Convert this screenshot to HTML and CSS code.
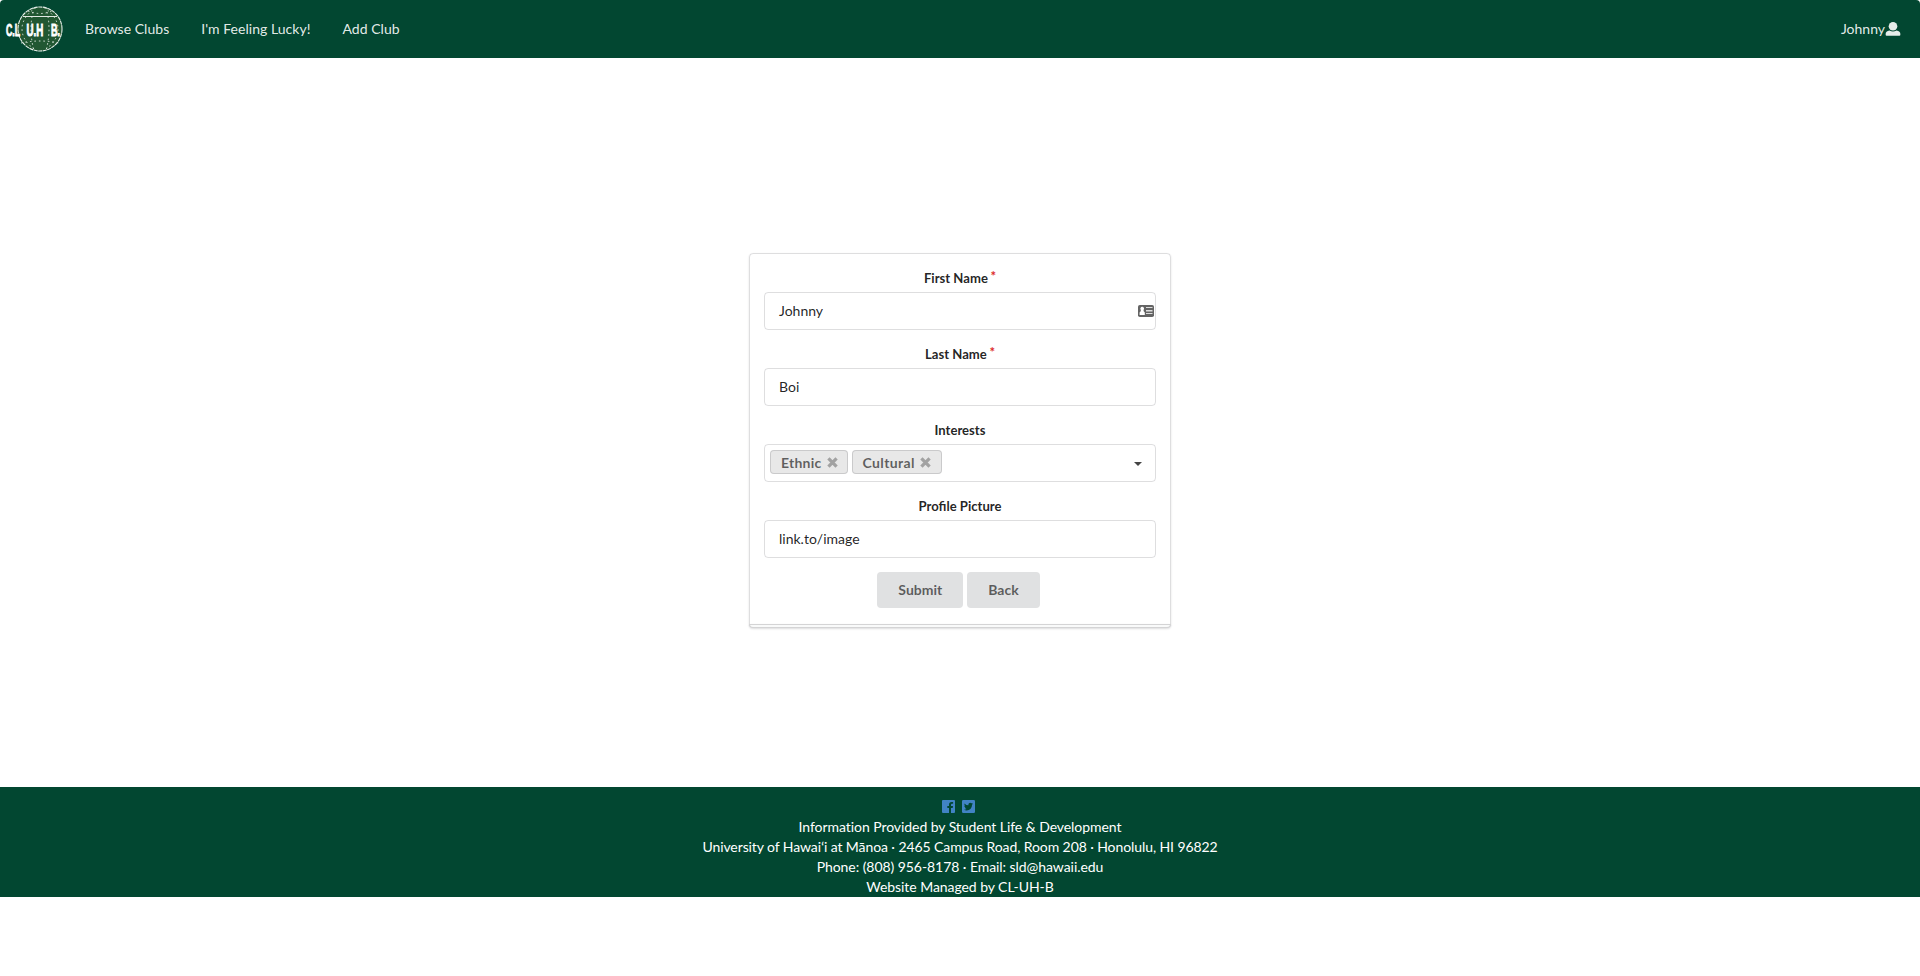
FILE: index.html
```html
<!DOCTYPE html>
<html lang="en">
<head>
<meta charset="utf-8">
<title>CL-UH-B</title>
<link rel="stylesheet" href="styles.css">
</head>
<body>
<nav class="menu">
  <a class="brand">
    <svg width="58" height="48" viewBox="0 0 58 48">
      <circle cx="35" cy="24" r="22" fill="#215732" stroke="#e8f0ea" stroke-width="1.1" stroke-dasharray="4 .6"/>
      <g fill="none" stroke="#dfe9e2" stroke-width="1">
        <path d="M18 11.500H52" stroke-width="1.2"/>
        <path d="M23 6Q35 11 47 6M16 38Q35 34 54 38M31 2.500Q17 12 17 24T31 45.500M39 2.500Q53 12 53 24T39 45.500M29 2.500Q23 24 29 45.500M41 2.500Q47 24 41 45.500" stroke-dasharray="1.500 3"/>
      </g>
      <g class="logo-text"><text transform="translate(1 30.500) scale(.53 1)">C.L</text><text transform="translate(21.500 30.500) scale(.59 1)">U.H</text><text transform="translate(46 30.500) scale(.55 1)">B.</text></g>
    </svg>
  </a>
  <a class="item">Browse Clubs</a>
  <a class="item">I'm Feeling Lucky!</a>
  <a class="item">Add Club</a>
  <a class="account">Johnny<svg width="16" height="16" viewBox="0 0 16 16"><circle cx="8" cy="5.200" r="4.300" fill="currentColor"/><path fill="currentColor" d="M4.500 9.600Q8 11.500 11.500 9.600 15.400 10 15.400 13.300q0 1.500-1 1.500H1.600q-1 0-1-1.500Q.6 10 4.500 9.600z"/></svg></a>
</nav>
<main class="content">
  <form class="segment">
    <div class="field"><label class="label required">First Name</label>
      <div class="input"><span>Johnny</span><svg class="card-icon" width="16" height="12" viewBox="0 0 16 12"><rect width="16" height="12" rx="1.800" fill="#646464"/><path fill="#fff" d="M4.200 1.800a1.800 1.800 0 0 1 1.300 3.100Q5.300 6 6.800 7.500V10H1.600V7.500Q3.100 6 2.900 4.900A1.800 1.800 0 0 1 4.200 1.800z"/><path fill="#ddd" d="M8 2h6.500v1H8zM8 5h6.500v1.500H8zM8 8h6.500v1H8z"/></svg></div></div>
    <div class="field"><label class="label required">Last Name</label><div class="input"><span>Boi</span></div></div>
    <div class="field"><label class="label">Interests</label>
      <div class="input dropdown">
        <a class="tag">Ethnic<svg width="11" height="11" viewBox="0 0 10 10"><path d="M1.300 1.300 8.700 8.700M8.700 1.300 1.300 8.700"/></svg></a>
        <a class="tag tag-wide">Cultural<svg width="11" height="11" viewBox="0 0 10 10"><path d="M1.300 1.300 8.700 8.700M8.700 1.300 1.300 8.700"/></svg></a>
        <svg class="caret" width="8" height="4" viewBox="0 0 8 4"><path fill="#444" d="M0 0h8L4 4z"/></svg>
      </div></div>
    <div class="field"><label class="label">Profile Picture</label><div class="input"><span>link.to/image</span></div></div>
    <div class="buttons"><button type="button" class="button">Submit</button><button type="button" class="button">Back</button></div>
  </form>
</main>
<footer class="footer">
  <div class="social">
    <svg width="13" height="13" viewBox="0 0 13 13"><path fill="#4183c4" fill-rule="evenodd" d="M1 0h11q1 0 1 1v11q0 1-1 1H9V8h1.700l.3-2H9V4.800q0-1 1-1h1.100V2H9.500Q7 2 7 4.500V6H5.300v2H7v5H1q-1 0-1-1V1q0-1 1-1z"/></svg>
    <svg width="13" height="13" viewBox="0 0 13 13"><rect width="13" height="13" rx="1.200" fill="#4183c4"/><path fill="#024731" d="M11 3.800l-1 1C10 8.300 7.600 10.500 4.700 10.500Q3.200 10.500 2 9.700q1.500 0 2.500-.8Q3.300 8.800 2.900 7.600h.8Q2.300 7.100 2.300 5.700l.8.2Q1.900 4.900 2.600 3.400 4.100 5.200 6.400 5.300 6.200 2.700 8.300 2.700q.7 0 1.300.6l1.200-.4-.8 1z"/></svg>
  </div>
  <div>Information Provided by Student Life &amp; Development</div>
  <div class="address">University of Hawaiʻi at Mānoa · 2465 Campus Road, Room 208 · Honolulu, HI 96822</div>
  <div>Phone: (808) 956-8178 · Email: sld@hawaii.edu</div>
  <div>Website Managed by CL-UH-B</div>
</footer>
</body>
</html>
```
FILE: styles.css
```css
*, *::after { box-sizing: border-box; }
body { margin: 0; background: #fff; color: rgba(0,0,0,.87); font: 14px/20px Lato, "Open Sans", sans-serif; }
.menu { height: 58px; display: flex; align-items: center; background: #024731; color: rgba(255,255,255,.9); border-radius: 4px 4px 0 0; }
.brand { display: flex; width: 69px; padding-left: 5px; }
.brand svg { overflow: visible; }
.logo-text { font: bold 16.5px "Liberation Sans", Arial, sans-serif; fill: #fff; stroke: #fff; stroke-width: .9px; }
.item { padding: 0 16px; letter-spacing: .03px; }
.account { display: flex; align-items: center; margin-left: auto; padding-right: 19px; }
.content { height: 729px; padding-top: 195px; }
.segment { position: relative; width: 422px; height: 372px; margin: 0 auto; padding: 14px; border: 1px solid rgba(34,36,38,.15); border-radius: 4px 4px 0 0; box-shadow: 0 1px 2px rgba(34,36,38,.15); }
.segment::after { content: ""; position: absolute; left: -1px; right: -1px; bottom: -4px; height: 4px; background: #f9fafa; border: 1px solid #d4d4d5; border-radius: 0 0 4px 4px; box-shadow: 0 1px 2px rgba(34,36,38,.15); }
.field { margin-bottom: 14px; }
.label { display: block; margin-bottom: 4px; text-align: center; font-size: 13.100px; font-weight: 700; }
.required::after { content: "*"; display: inline-block; margin: -2px 0 0 2.600px; vertical-align: top; color: #db2828; }
.input { display: flex; align-items: center; height: 38px; padding: 0 1px 0 14px; border: 1px solid rgba(34,36,38,.15); border-radius: 4px; }
.card-icon { margin-left: auto; }
.dropdown { gap: 4px; padding: 0 13px 2px 5px; }
.tag { display: flex; align-items: center; gap: 5px; height: 24px; padding: 1px 10px 0 11px; background: #e8e8e8; border-radius: 4px; box-shadow: 0 0 0 1px rgba(34,36,38,.15) inset; color: rgba(0,0,0,.6); font-weight: 700; letter-spacing: .24px; }
.tag-wide { letter-spacing: .36px; padding-right: 11px; }
.tag svg { fill: none; stroke: #a2a2a2; stroke-width: 3; }
.caret { margin: 3px 0 0 auto; }
.buttons { display: flex; justify-content: center; gap: 4px; padding-right: 3px; }
.button { height: 36px; padding: 0 21px; border: 0; border-radius: 4px; background: #e0e1e2; color: rgba(0,0,0,.6); font: 700 14px/14px Lato, sans-serif; }
.footer { height: 110px; padding-top: 10px; background: #024731; color: #fff; text-align: center; letter-spacing: -.06px; }
.address { letter-spacing: -.09px; }
.social { display: flex; justify-content: center; align-items: center; gap: 7px; height: 20px; padding: 0 3px 1px 0; }
```
